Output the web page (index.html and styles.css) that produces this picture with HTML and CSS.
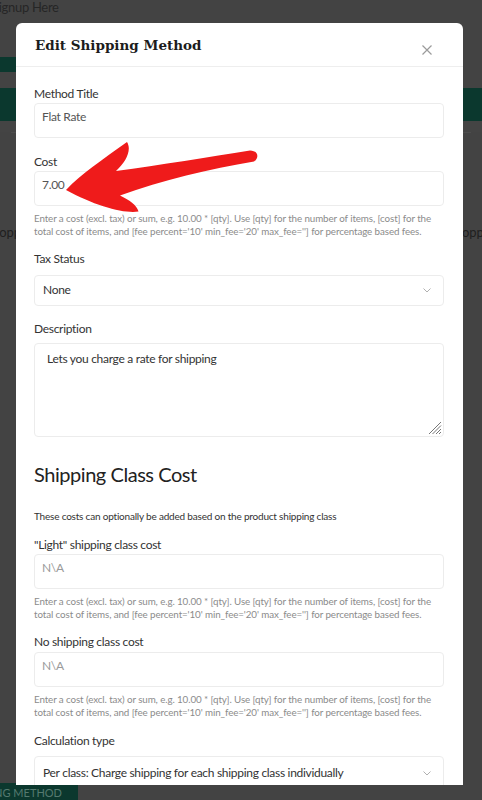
FILE: index.html
```html
<!DOCTYPE html>
<html lang="en">
<head>
<meta charset="utf-8">
<title>Edit Shipping Method</title>
<link rel="stylesheet" href="styles.css">
</head>
<body>
<div class="page">
  <div class="bg-top"><span class="signup">Signup Here</span></div>
  <div class="bg-logo"></div>
  <div class="bg-nav"></div>
  <div class="bg-row"><span class="bg-left">Shopping</span><span class="bg-right">Shopping</span></div>
  <div class="bg-bottom"><span class="bg-btn">Add Shipping Method</span></div>
</div>

<div class="modal">
  <div class="modal-header">
    <h2 class="modal-title">Edit Shipping Method</h2>
    <svg class="close" width="10" height="10" viewBox="0 0 10 10"><path d="M0.5 0.5L9.5 9.5M9.5 0.5L0.5 9.5" stroke="#9b9b9b" stroke-width="1.2" fill="none"/></svg>
  </div>
  <div class="modal-body">
    <div class="group first">
      <div class="label">Method Title</div>
      <div class="field">Flat Rate</div>
    </div>
    <div class="group">
      <div class="label">Cost</div>
      <div class="field">7.00</div>
      <p class="help">Enter a cost (excl. tax) or sum, e.g. 10.00 * [qty]. Use [qty] for the number of items, [cost] for the total cost of items, and [fee percent='10' min_fee='20' max_fee=''] for percentage based fees.</p>
    </div>
    <div class="group g-tax">
      <div class="label">Tax Status</div>
      <div class="select">None<svg class="chev" width="8" height="5" viewBox="0 0 8 5"><path d="M0.5 0.5L4 4L7.5 0.5" stroke="#b0b0b0" stroke-width="1" fill="none"/></svg></div>
    </div>
    <div class="group g-desc">
      <div class="label">Description</div>
      <div class="textarea">Lets you charge a rate for shipping<svg class="grip" width="14" height="14" viewBox="0 0 14 14"><path d="M13 1L1 13M13 4.5L4.5 13M13 8L8 13M13 11L11 13" stroke="#777" stroke-width="1" fill="none"/></svg></div>
    </div>
    <h3 class="section-title">Shipping Class Cost</h3>
    <p class="section-note">These costs can optionally be added based on the product shipping class</p>
    <div class="group g-class">
      <div class="label">"Light" shipping class cost</div>
      <div class="field placeholder">N\A</div>
      <p class="help">Enter a cost (excl. tax) or sum, e.g. 10.00 * [qty]. Use [qty] for the number of items, [cost] for the total cost of items, and [fee percent='10' min_fee='20' max_fee=''] for percentage based fees.</p>
    </div>
    <div class="group g-class2">
      <div class="label">No shipping class cost</div>
      <div class="field placeholder">N\A</div>
      <p class="help">Enter a cost (excl. tax) or sum, e.g. 10.00 * [qty]. Use [qty] for the number of items, [cost] for the total cost of items, and [fee percent='10' min_fee='20' max_fee=''] for percentage based fees.</p>
    </div>
    <div class="group g-calc">
      <div class="label">Calculation type</div>
      <div class="select tall">Per class: Charge shipping for each shipping class individually<svg class="chev" width="8" height="5" viewBox="0 0 8 5"><path d="M0.5 0.5L4 4L7.5 0.5" stroke="#b0b0b0" stroke-width="1" fill="none"/></svg></div>
    </div>
  </div>
</div>

<svg class="arrow" width="200" height="80" viewBox="60 140 200 80">
  <path d="M66,190 C81,174 102,160 127,142 C132,150 126,162 116,171 C160,165 210,157 250,150.5 C259,151 259,158 254,161.5 C210,169 162,180 120,195.5 C129,200 137,205 138.5,211.5 C125,214 95,206 66,190 Z" fill="#ef1b1b"/>
</svg>
</body>
</html>
```

FILE: styles.css
```css
* { box-sizing: border-box; }
html, body { margin: 0; padding: 0; }
body {
  width: 482px;
  height: 800px;
  overflow: hidden;
  position: relative;
  background: #434343;
  font-family: Lato, "Liberation Sans", sans-serif;
}

/* dimmed page behind the modal */
.page {
  height: 800px;
  display: flex;
  flex-direction: column;
  overflow: hidden;
}
.bg-top {
  height: 57px;
  line-height: 14px;
  font-size: 13px;
  letter-spacing: -0.3px;
  color: #262626;
}
.signup { margin-left: -8px; }
.bg-logo {
  width: 120px;
  height: 15px;
  background: #0b382e;
}
.bg-nav {
  margin-top: 16px;
  height: 44px;
  background: #0b382e;
  border-bottom: 11px solid #444;
  box-shadow: 0 12px 0 -11px #4d4d4d;
}
.bg-row {
  margin-top: 92px;
  display: flex;
  justify-content: space-between;
  font-size: 13px;
  line-height: 16px;
  color: #1f1f1f;
}
.bg-left { margin-left: -15px; }
.bg-right { margin-right: -19px; }
.bg-bottom {
  margin-top: auto;
  height: 17px;
}
.bg-btn {
  display: inline-block;
  height: 17px;
  width: 78px;
  background: #0b382e;
  color: #557a70;
  font-size: 11px;
  line-height: 19px;
  text-transform: uppercase;
  white-space: nowrap;
  direction: rtl;
  overflow: hidden;
  padding-right: 16px;
}

/* modal */
.modal {
  position: absolute;
  left: 16px;
  top: 23px;
  width: 447px;
  height: 762px;
  background: #fff;
  border-radius: 6px 6px 0 0;
  overflow: hidden;
}
.modal-header {
  height: 44px;
  border-bottom: 1px solid #eeeeee;
  display: flex;
  align-items: center;
  justify-content: space-between;
  padding: 0 31px 0 19px;
}
.modal-title {
  margin: 0;
  font-family: "DejaVu Serif", "Liberation Serif", serif;
  font-weight: bold;
  font-size: 13.5px;
  color: #1c1c1c;
}
.close { margin-top: 11px; }

.modal-body {
  padding: 19px 19px 0 18px;
  color: #333;
}
.label {
  font-size: 12px;
  letter-spacing: -0.3px;
  line-height: 16px;
  color: #333;
}
.field {
  margin-top: 1px;
  height: 35px;
  border: 1px solid #ececec;
  border-radius: 4px;
  padding: 5px 7px 0;
  font-size: 12px;
  letter-spacing: -0.3px;
  line-height: 16px;
  color: #555;
}
.field.placeholder { color: #9a9a9a; }
.group { margin-top: 16px; }
.group.first { margin-top: 0; }
.help {
  margin: 6px 0 0;
  font-size: 9.8px;
  letter-spacing: -0.1px;
  line-height: 12.6px;
  color: #8b8b8b;
}
.g-tax { margin-top: 14px; }
.select {
  margin-top: 8px;
  height: 31px;
  border: 1px solid #ececec;
  border-radius: 4px;
  padding: 6px 8px 0;
  font-size: 12px;
  letter-spacing: -0.3px;
  line-height: 16px;
  color: #333;
  display: flex;
  justify-content: space-between;
  align-items: flex-start;
}
.select .chev { margin-top: 6px; margin-right: 4px; }
.select.tall { margin-top: 7px; height: 36px; padding-top: 8px; }
.g-desc { margin-top: 15px; }
.textarea {
  margin-top: 6px;
  height: 94px;
  border: 1px solid #ececec;
  border-radius: 4px;
  padding: 7px 12px 0;
  font-size: 12px;
  letter-spacing: -0.3px;
  line-height: 16px;
  color: #333;
  position: relative;
}
.grip {
  position: absolute;
  right: 1px;
  bottom: 1px;
}
.section-title {
  margin: 24px 0 0;
  font-size: 20px;
  letter-spacing: -0.45px;
  line-height: 26px;
  font-weight: normal;
  color: #222;
}
.section-note {
  margin: 23px 0 0;
  font-size: 10px;
  letter-spacing: -0.2px;
  line-height: 13px;
  color: #333;
}
.g-class { margin-top: 14px; }
.g-class2 { margin-top: 14px; }
.g-class2 .field { margin-top: 2px; }
.g-calc { margin-top: 14px; }

.arrow {
  position: absolute;
  left: 60px;
  top: 140px;
}
```
